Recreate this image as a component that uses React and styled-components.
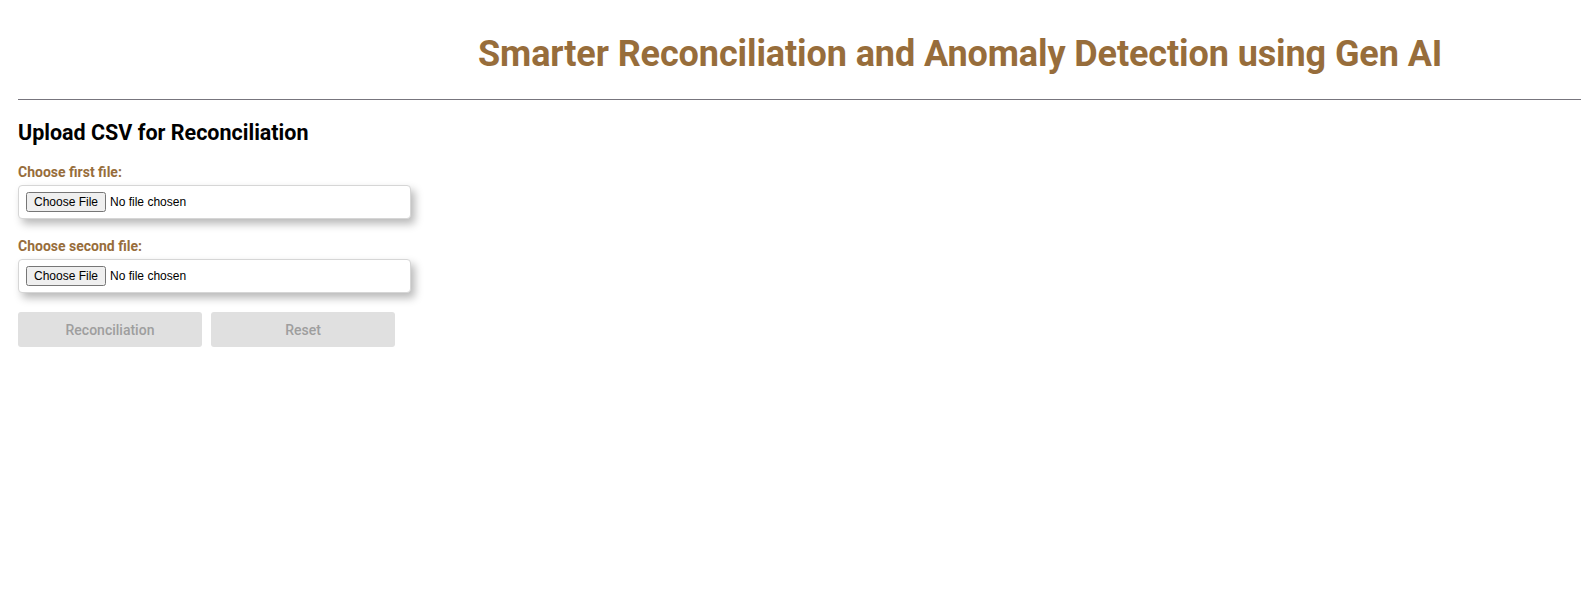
import styled, { createGlobalStyle } from 'styled-components';

const GlobalStyle = createGlobalStyle`
  body {
    margin: 0;
    background: #fff;
    font-family: Roboto, "Liberation Sans", sans-serif;
  }
`;

const Page = styled.div`
  padding: 0 0 0 18px;
`;

const Header = styled.header`
  display: flex;
  justify-content: flex-start;
  padding-left: 460px;
  border-bottom: 1px solid #77757d;
`;

const Title = styled.h1`
  margin: 33px 0 24px;
  font-size: 36px;
  font-weight: 700;
  color: #976d3b;
  letter-spacing: -0.1px;
`;

const Section = styled.section`
  display: flex;
  flex-direction: column;
  width: 393px;
`;

const Heading = styled.h2`
  margin: 20px 0 19px;
  font-size: 21.5px;
  font-weight: 700;
  color: #000;
`;

const Field = styled.div`
  display: flex;
  flex-direction: column;
  gap: 5px;
  margin-bottom: 19px;
`;

const Label = styled.label`
  font-size: 14px;
  font-weight: 700;
  color: #976d3b;
`;

const FileBox = styled.div`
  display: flex;
  align-items: center;
  height: 34px;
  padding: 0 7px;
  box-sizing: border-box;
  background: #fff;
  border: 1px solid #d6d6d6;
  border-radius: 4px;
  box-shadow: 4px 5px 8px rgba(0, 0, 0, 0.28);

  input {
    font-family: Arial, "Liberation Sans", sans-serif;
    font-size: 12px;
  }
`;

const Actions = styled.div`
  display: flex;
  gap: 9px;
`;

const Button = styled.button`
  width: 184px;
  height: 35px;
  border: none;
  border-radius: 3px;
  background: #e0e0e0;
  color: #9e9e9e;
  font-family: Roboto, "Liberation Sans", sans-serif;
  font-size: 14px;
  font-weight: 500;
  cursor: default;
`;

function App() {
  return (
    <>
      <GlobalStyle />
      <Page>
        <Header>
          <Title>Smarter Reconciliation and Anomaly Detection using Gen AI</Title>
        </Header>
        <Section>
          <Heading>Upload CSV for Reconciliation</Heading>
          <Field>
            <Label htmlFor="file1">Choose first file:</Label>
            <FileBox>
              <input id="file1" type="file" accept=".csv" />
            </FileBox>
          </Field>
          <Field>
            <Label htmlFor="file2">Choose second file:</Label>
            <FileBox>
              <input id="file2" type="file" accept=".csv" />
            </FileBox>
          </Field>
          <Actions>
            <Button disabled>Reconciliation</Button>
            <Button disabled>Reset</Button>
          </Actions>
        </Section>
      </Page>
    </>
  );
}

export default App;
